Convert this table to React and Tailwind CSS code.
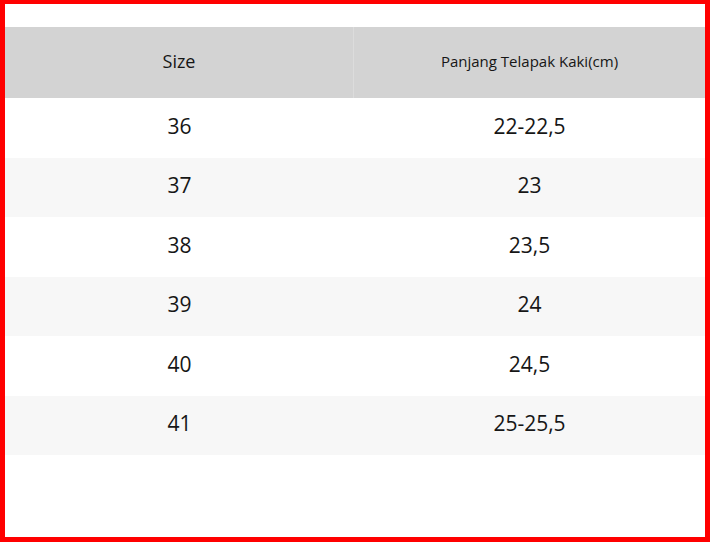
import React from 'react';

const rows = [
  ['36', '22-22,5'],
  ['37', '23'],
  ['38', '23,5'],
  ['39', '24'],
  ['40', '24,5'],
  ['41', '25-25,5'],
];

export default function App() {
  return (
    <div className="w-[710px] h-[542px] bg-white border-[#ff0000] border-x-[5px] border-t-4 border-b-[5px] box-border font-['Open_Sans',sans-serif] text-[#161616]">
      <div className="pt-[23px]">
        <div className="grid grid-cols-[349px_1fr] h-[71px] bg-[#d3d3d3]">
          <div className="flex items-center justify-center pb-[2px] text-[18px] border-r border-[#dcdcdc]">Size</div>
          <div className="flex items-center justify-center pb-[3px] text-[15px]">Panjang Telapak Kaki(cm)</div>
        </div>
        {rows.map(([size, len], i) => (
          <div
            key={size}
            className={`grid grid-cols-[349px_1fr] h-[59.5px] pb-[3px] text-[21px] ${i % 2 === 1 ? 'bg-[#f7f7f7]' : 'bg-white'}`}
          >
            <div className="flex items-center justify-center">{size}</div>
            <div className="flex items-center justify-center">{len}</div>
          </div>
        ))}
      </div>
    </div>
  );
}
